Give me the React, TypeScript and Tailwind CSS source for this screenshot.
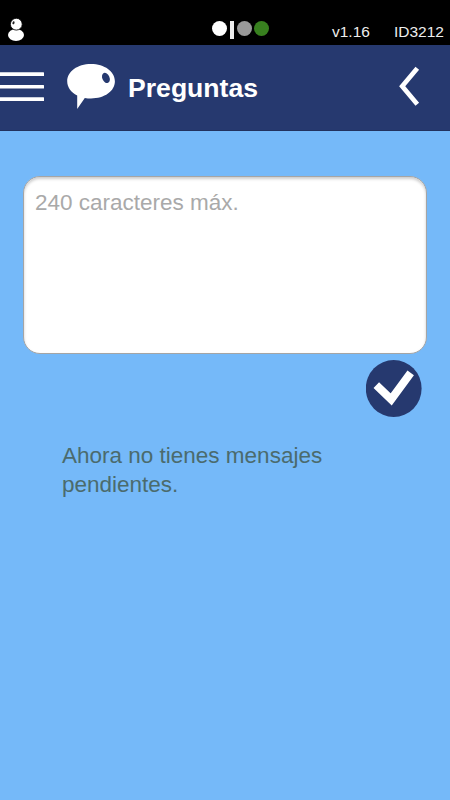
import React from "react";

const UserIcon = () => (
  <svg width="18" height="24" viewBox="0 0 18 24" className="block">
    <ellipse cx="9" cy="17" rx="8" ry="5.9" fill="#fff" />
    <circle cx="9.3" cy="6.2" r="5.9" fill="#fff" stroke="#000" strokeWidth="0.8" />
    <ellipse cx="6.5" cy="4.8" rx="1" ry="1.6" fill="#222" transform="rotate(20 6.5 4.8)" />
  </svg>
);

const MenuIcon = () => (
  <svg width="44" height="32" viewBox="0 0 44 32" className="block" fill="#fff">
    <rect x="-2" y="1.300" width="46" height="3.700" rx="0.500" />
    <rect x="-2" y="13.900" width="46" height="3.700" rx="0.500" />
    <rect x="-2" y="26.300" width="46" height="3.700" rx="0.500" />
  </svg>
);

const BubbleIcon = () => (
  <svg width="50" height="48" viewBox="0 0 50 48" className="block">
    <path
      d="M25 1C11.500 1 1.200 8.500 1.200 18.300C1.200 24.300 5 29.300 11.200 32.500L11.200 46L18.800 34.900C20.800 35.300 22.900 35.500 25 35.500C38.500 35.500 48.900 28.200 48.900 18.300C48.900 8.500 38.500 1 25 1Z"
      fill="#fff"
    />
    <ellipse cx="39.900" cy="14.900" rx="3.600" ry="5.400" fill="#26396f" transform="rotate(-23 39.900 14.900)" />
  </svg>
);

const BackIcon = () => (
  <svg width="22" height="42" viewBox="0 0 22 42" className="block">
    <path d="M18.300 2.300L3.200 20.300L18.300 38.300" fill="none" stroke="#fff" strokeWidth="4.700" />
  </svg>
);

const CheckIcon = () => (
  <svg width="56" height="58" viewBox="0 0 56 58" className="block">
    <ellipse cx="27.700" cy="28.500" rx="27.900" ry="28.500" fill="#26396f" />
    <path d="M10.300 25.200L25.200 39.400L44.700 12.800" fill="none" stroke="#fff" strokeWidth="8" />
  </svg>
);

const StatusBar = () => {
  return (
    <div className="flex h-[45px] bg-black text-[15.500px] leading-[18px] text-[#eeeeee]">
      <div className="w-[211px] pl-[7px] pt-[18px]">
        <UserIcon />
      </div>
      <div className="flex w-[121px] items-start pt-[21px]">
        <span className="ml-px h-[15px] w-[15px] rounded-full bg-white" />
        <span className="ml-[3px] h-[18px] w-1 bg-[#eeeeee]" />
        <span className="ml-[3px] h-[15px] w-[15px] rounded-full bg-[#999999]" />
        <span className="ml-[2px] h-[15px] w-[15px] rounded-full bg-[#38801f]" />
      </div>
      <span className="w-[62px] pt-[23px]">v1.16</span>
      <span className="pt-[23px]">ID3212</span>
    </div>
  );
};

const Header = () => {
  return (
    <div className="flex h-[86px] border-b border-[#22325f] bg-[#26396f]">
      <button className="flex w-[44px] items-start pt-[26px]">
        <MenuIcon />
      </button>
      <div className="ml-[22px] pt-[18px]">
        <BubbleIcon />
      </div>
      <h1 className="ml-[12px] pt-[28px] text-[26.600px] font-bold leading-[30px] text-white">
        Preguntas
      </h1>
      <button className="ml-auto mr-[29px] flex items-start pt-[21px]">
        <BackIcon />
      </button>
    </div>
  );
};

export default function App() {
  return (
    <div className="min-h-screen bg-[#75b9f9] font-['Liberation_Sans',Arial,sans-serif]">
      <StatusBar />
      <Header />
      <div className="px-[23px] pt-[45px]">
        <textarea
          placeholder="240 caracteres máx."
          maxLength={240}
          className="block h-[178px] w-full resize-none rounded-[17px] border border-[#a5a5a5] bg-white pl-[11px] pr-3 pt-[12px] text-[22.500px] leading-[27px] shadow-[inset_0_2px_3px_#cccccc] outline-none placeholder:text-[#a9a9a9]"
        />
        <div className="mr-[5px] mt-[6px] flex justify-end">
          <button>
            <CheckIcon />
          </button>
        </div>
        <p className="ml-[39px] mt-[23px] w-[300px] text-[22.500px] leading-[29px] text-[#4b6b6d]">
          Ahora no tienes mensajes pendientes.
        </p>
      </div>
    </div>
  );
}
